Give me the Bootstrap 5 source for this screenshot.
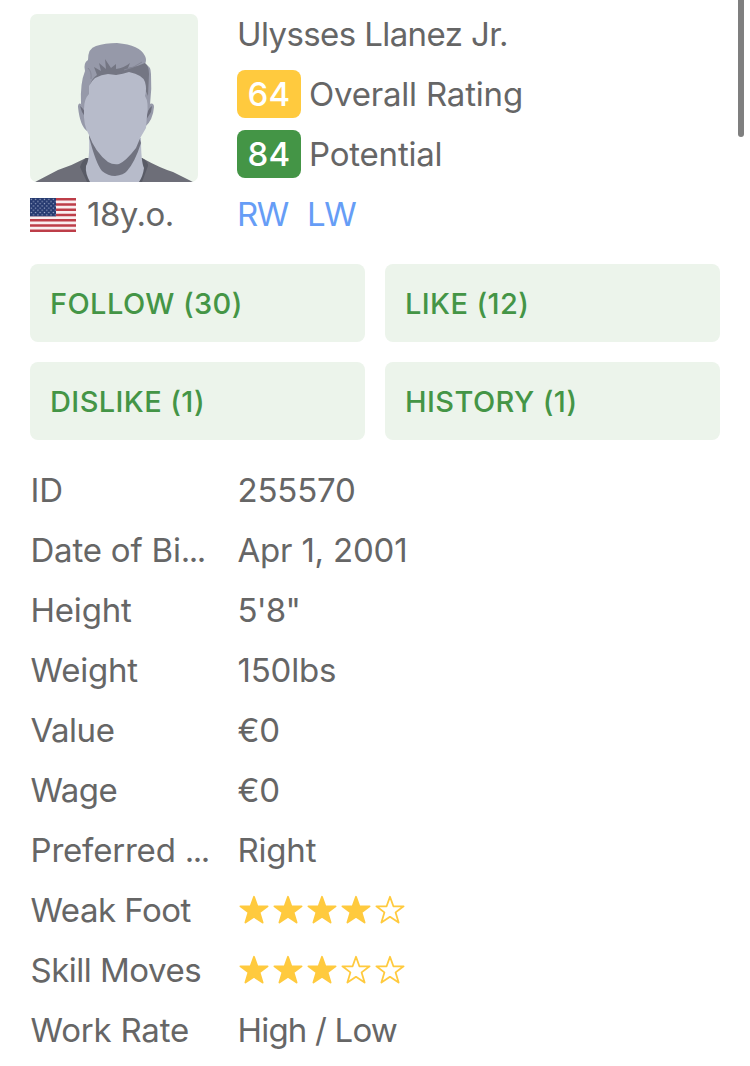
<!DOCTYPE html>
<html lang="en">
<head>
<meta charset="utf-8">
<meta name="viewport" content="width=device-width, initial-scale=1">
<title>Ulysses Llanez Jr.</title>
<link rel="stylesheet" href="https://cdn.jsdelivr.net/npm/bootstrap@5.3.0/dist/css/bootstrap.min.css">
<style>
  body { font-family: Inter, "Liberation Sans", sans-serif; font-size: 33px; line-height: 60px; color: #666; letter-spacing: -.2px; background: #fff; overflow: hidden; }
  .page { padding: 4px 30px 0; }
  .side { width: 207px; flex: none; }
  .avatar { width: 168px; height: 168px; border-radius: 7px; margin-top: 10px; margin-bottom: 2px; display: block; }
  .line { height: 60px; white-space: nowrap; }
  .flag { width: 46px; height: 34px; margin-right: 11px; position: relative; top: 1px; }
  .badge-row { margin-left: 0; }
  .score { width: 64px; height: 48px; border-radius: 8px; color: #fff; font-weight: 500; line-height: 48px; margin-right: 8px; letter-spacing: .4px; }
  .gold { background: #ffca3e; }
  .green { background: #449546; }
  .pos { color: #669df6; text-decoration: none; letter-spacing: -1.4px; margin-right: 19px; }
  .actions { display: grid; grid-template-columns: 1fr 1fr; gap: 20px; margin-top: 20px; margin-bottom: 20px; }
  .action { height: 78px; border: 0; border-radius: 8px; background: #ecf4eb; color: #449546; font-weight: 500; font-size: 29px; text-align: left; padding: 1px 20px 0; line-height: 76px; letter-spacing: .4px; }
  .term { width: 207.5px; padding-left: .5px; flex: none; }
  .dots { letter-spacing: -1.5px; }
  .tight { letter-spacing: -.5px; }
  .tighter { letter-spacing: -.8px; }
  .name-text { letter-spacing: -.6px; }
  .stars { gap: 4px; padding-left: 1.5px; }
  .stars svg { width: 30px; height: 30px; }
  .thumb { position: absolute; top: -8px; left: 738px; width: 6px; height: 145px; border-radius: 3px; background: #7f7f7f; }
</style>
</head>
<body>
<svg width="0" height="0" class="position-absolute">
  <defs>
    <path id="star" d="M15 1.8 L18.4 11.3 H28.6 L20.6 17.4 L23.6 27.6 L15 21.8 L6.4 27.6 L9.4 17.4 L1.4 11.3 H11.6 Z" stroke-linejoin="round" stroke="#ffca3e" stroke-width="1.8"/>
    <pattern id="stars-grid" width="4.4" height="4.4" patternUnits="userSpaceOnUse"><circle cx="1.3" cy="1.3" r=".7" fill="#a9b3d0"/><circle cx="3.5" cy="3.5" r=".7" fill="#a9b3d0"/></pattern>
  </defs>
</svg>
<main class="page">
  <section class="d-flex">
    <div class="side">
      <svg class="avatar" viewBox="0 0 168 168">
        <rect width="168" height="168" fill="#ecf4eb"/>
        <path d="M5 168 L28 156 Q43 151 56 144 L112 144 Q130 154 143 158 L163 168Z" fill="#6d6e78"/>
        <path d="M56 144 L112 144 Q118 147 118 152 L112 168 H57 L50 153Q52 147 56 144Z" fill="#595b66"/>
        <path d="M59 124 H111 Q111 148 114 154 Q113 162 109 168 H60 Q55 159 56 152 Q60 145 59 124Z" fill="#b7bbca"/>
        <path d="M59 123 Q66 150 72 157 Q78 162 85 162 Q94 161 97 157 Q105 148 111 129 L105 110 H62Z" fill="#717380"/>
        <path d="M53 91 Q48 87 48 93 Q50 112 57 117 L64 114 V90Z M117 91 Q124 87 124 93 Q123 106 115 113 L108 112V91Z" fill="#9699a9"/>
        <path d="M50 92 Q56 96 57 106 L52 98Z M122 92 Q117 95 116 106 L121 98Z" fill="#6d6e7c"/>
        <path d="M51 90 Q50 69 55 57 Q53 49 58 46 Q58 34 66 32 Q75 29 87 29 Q110 31 115 42 Q117 46 115 50 Q121 52 121 60 Q122 75 120 91 L115 96 H57Z" fill="#9699a9"/>
        <path d="M60 72 Q61 65 67 61 L64 53 L71 57 L69 49 L76 55 L75 45 L81 54 L86 50 L86 55 Q94 54 100 49 L98 54 Q107 53 115 49 Q119 52 119 60 L118 82 Q112 67 106 62 L64 66Z" fill="#747683"/>
        <path d="M94 56 Q104 54 112 48 M58 54 Q62 58 61 65" fill="none" stroke="#858797" stroke-width="1"/>
        <path d="M59 72 Q64 61 78 60 L86 61 Q93 60 99 58 Q113 61 115 68 Q117 75 115 82 Q119 88 117 102 L116 114 Q110 123 106 134 Q96 147 89 150 Q83 151 78 148 Q65 138 59 121 Q53 111 54 95 Q54 85 59 80Z" fill="#b7bbca"/>
      </svg>
      <div class="line d-flex align-items-center">
        <svg class="flag" viewBox="0 0 46 34">
          <rect width="46" height="34" fill="#f9eef0"/>
          <path d="M0 1.3H46M0 6.55H46M0 11.8H46M0 17H46M0 22.2H46M0 27.45H46M0 32.7H46" stroke="#bd3d48" stroke-width="2.6"/>
          <rect width="26" height="18.3" fill="#263a70"/>
          <rect width="26" height="18.3" fill="url(#stars-grid)"/>
        </svg>
        <span class="tight">18y.o.</span>
      </div>
    </div>
    <div>
      <div class="line name-text">Ulysses Llanez Jr.</div>
      <div class="line badge-row d-flex align-items-center"><span class="score gold text-center">64</span><span>Overall Rating</span></div>
      <div class="line badge-row d-flex align-items-center"><span class="score green text-center">84</span><span>Potential</span></div>
      <div class="line d-flex"><a class="pos" href="#">RW</a><a class="pos" href="#">LW</a></div>
    </div>
  </section>
  <section class="actions">
    <button class="action">FOLLOW (30)</button><button class="action">LIKE (12)</button>
    <button class="action">DISLIKE (1)</button><button class="action">HISTORY (1)</button>
  </section>
  <section>
    <div class="line d-flex"><div class="term">ID</div><div>255570</div></div>
    <div class="line d-flex"><div class="term">Date of Bi<span class="dots">...</span></div><div>Apr 1, 2001</div></div>
    <div class="line d-flex"><div class="term">Height</div><div class="tighter">5'8"</div></div>
    <div class="line d-flex"><div class="term">Weight</div><div>150lbs</div></div>
    <div class="line d-flex"><div class="term tight">Value</div><div>€0</div></div>
    <div class="line d-flex"><div class="term tight">Wage</div><div>€0</div></div>
    <div class="line d-flex"><div class="term">Preferred <span class="dots">...</span></div><div>Right</div></div>
    <div class="line d-flex"><div class="term tight">Weak Foot</div><div class="stars d-flex align-items-center">
      <svg fill="#ffca3e"><use href="#star"/></svg><svg fill="#ffca3e"><use href="#star"/></svg><svg fill="#ffca3e"><use href="#star"/></svg><svg fill="#ffca3e"><use href="#star"/></svg><svg fill="none"><use href="#star"/></svg></div></div>
    <div class="line d-flex"><div class="term tight">Skill Moves</div><div class="stars d-flex align-items-center">
      <svg fill="#ffca3e"><use href="#star"/></svg><svg fill="#ffca3e"><use href="#star"/></svg><svg fill="#ffca3e"><use href="#star"/></svg><svg fill="none"><use href="#star"/></svg><svg fill="none"><use href="#star"/></svg></div></div>
    <div class="line d-flex"><div class="term">Work Rate</div><div class="tighter">High / Low</div></div>
  </section>
</main>
<div class="thumb"></div>
<script src="https://cdn.jsdelivr.net/npm/bootstrap@5.3.0/dist/js/bootstrap.bundle.min.js"></script>
</body>
</html>
